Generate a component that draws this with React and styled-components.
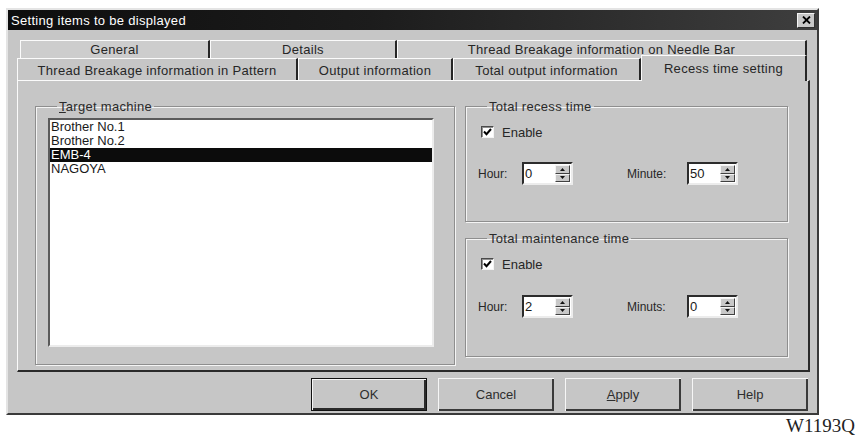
import React from 'react';
import styled, { createGlobalStyle } from 'styled-components';

const GlobalStyle = createGlobalStyle`
  html, body { margin: 0; padding: 0; background: #fff; }
  body { font-family: "Liberation Sans", Arial, sans-serif; color: #2a2a2a; }
  * { box-sizing: border-box; }
`;

const Page = styled.div`
  width: 859px;
  height: 437px;
  padding: 8px 0 0 6px;
  display: flex;
  flex-direction: column;
  align-items: flex-start;
`;

const Window = styled.div`
  width: 813px;
  height: 407px;
  background: #c6c6c6;
  border: 2px solid;
  border-color: #e4e4e4 #3a3a3a #3a3a3a #e4e4e4;
  display: flex;
  flex-direction: column;
`;

const TitleBar = styled.div`
  height: 20px;
  flex: 0 0 20px;
  background: linear-gradient(90deg, #0e0e0e 0%, #1c1c1c 45%, #3e3e3e 100%);
  display: flex;
  align-items: center;
  justify-content: space-between;
  padding: 0 2px 0 2px;
`;

const TitleText = styled.span`
  color: #fff;
  font-size: 13px;
  letter-spacing: 0.3px;
  padding-left: 1px;
`;

const CloseButton = styled.div`
  width: 18px;
  height: 15px;
  background: #c8c8c8;
  border: 1px solid;
  border-color: #f4f4f4 #303030 #303030 #f4f4f4;
  display: flex;
  align-items: center;
  justify-content: center;
`;

const Body = styled.div`
  flex: 1;
  display: flex;
  flex-direction: column;
  padding: 10px 7px 2px 9px;
`;

const TabStrip = styled.div`
  display: flex;
  flex-direction: column;
`;

const TabRow = styled.div`
  display: flex;
  align-items: flex-end;
  height: ${p => p.$h}px;
  margin-left: ${p => p.$indent}px;
  margin-right: 3px;
`;

const Tab = styled.div`
  flex: 0 0 ${p => p.$w}px;
  height: ${p => (p.$active ? '26px' : '100%')};
  margin-bottom: ${p => (p.$active ? '-1px' : '0')};
  position: relative;
  z-index: ${p => (p.$active ? 2 : 0)};
  background: ${p => (p.$back ? '#cdcdcd' : '#c6c6c6')};
  border-top: 1px solid #fbfbfb;
  border-left: 1px solid #fbfbfb;
  border-right: 2px solid #262626;
  display: flex;
  align-items: ${p => (p.$active ? 'flex-start' : 'center')};
  padding-top: ${p => (p.$active ? '5px' : p.$back ? '0' : '2px')};
  justify-content: center;
  font-size: 13px;
  letter-spacing: 0.3px;
  color: #262626;
  white-space: nowrap;
`;

const Panel = styled.div`
  flex: 0 0 292px;
  border-top: 1px solid #fbfbfb;
  border-left: 1px solid #fbfbfb;
  border-right: 2px solid #2a2a2a;
  border-bottom: 2px solid #2a2a2a;
  display: flex;
  gap: 10px;
  padding: 18px 20px 5px 17px;
`;

const Group = styled.fieldset`
  margin: 0;
  min-width: 0;
  width: ${p => p.$w}px;
  height: ${p => p.$h}px;
  border: 1px solid #8e8e8e;
  box-shadow: 1px 1px 0 #f4f4f4, inset 1px 1px 0 #f4f4f4;
  padding: ${p => p.$pad};
`;

const Legend = styled.legend`
  padding: 0 2px;
  margin-left: 9px;
  font-size: 13px;
  line-height: 15px;
  letter-spacing: 0.3px;
  color: #2a2a2a;
`;

const Mnemonic = styled.span`
  text-decoration: underline;
`;

const ListBox = styled.div`
  height: 229px;
  background: #fff;
  border: 2px solid;
  border-color: #5a5a5a #ececec #ececec #5a5a5a;
  display: flex;
  flex-direction: column;
`;

const ListItem = styled.div`
  height: 14px;
  line-height: 14px;
  font-size: 13px;
  padding-left: 1px;
  color: ${p => (p.$selected ? '#fff' : '#1a1a1a')};
  background: ${p => (p.$selected ? '#0c0c0c' : 'transparent')};
`;

const RightColumn = styled.div`
  display: flex;
  flex-direction: column;
  gap: 9px;
`;

const CheckRow = styled.label`
  display: flex;
  align-items: center;
  gap: 8px;
  height: 16px;
  margin: 10px 0 0 3px;
  font-size: 13px;
  color: #262626;
`;

const CheckBox = styled.span`
  width: 13px;
  height: 12px;
  background: #fff;
  border: 1px solid;
  border-color: #4a4a4a #f4f4f4 #f4f4f4 #4a4a4a;
  box-shadow: inset 1px 1px 0 #909090;
  display: flex;
  align-items: center;
  justify-content: center;
`;

const SpinRow = styled.div`
  display: flex;
  align-items: center;
  height: 23px;
  margin-top: ${p => p.$top}px;
`;

const FieldLabel = styled.span`
  flex: 0 0 ${p => p.$w}px;
  font-size: 12px;
  color: #262626;
`;

const SpinBox = styled.div`
  flex: 0 0 ${p => p.$w}px;
  height: 23px;
  background: #fff;
  border: 2px solid;
  border-color: #2c2c2c #ececec #ececec #2c2c2c;
  display: flex;
  align-items: stretch;
  margin-right: ${p => p.$mr || 0}px;
`;

const SpinValue = styled.span`
  flex: 1;
  font-size: 13px;
  line-height: 19px;
  padding-left: 1px;
  color: #1a1a1a;
`;

const SpinButtons = styled.div`
  flex: 0 0 15px;
  display: flex;
  flex-direction: column;
  margin: 1px 1px 1px 0;
`;

const SpinArrow = styled.div`
  flex: 1;
  background: #c8c8c8;
  border: 1px solid;
  border-color: #f4f4f4 #404040 #404040 #f4f4f4;
  display: flex;
  align-items: center;
  justify-content: center;
`;

const ButtonRow = styled.div`
  display: flex;
  justify-content: flex-end;
  gap: 11px;
  margin: 6px 2px 0 0;
`;

const Button = styled.div`
  width: 116px;
  height: 33px;
  background: #c6c6c6;
  border: ${p => (p.$default ? '1px solid #111' : '0')};
  display: flex;
  align-items: center;
  justify-content: center;
  font-size: 13px;
  color: #2e2e2e;
  box-shadow: ${p =>
    p.$default
      ? 'inset 1px 1px 0 #f6f6f6, inset -2px -2px 0 #2a2a2a'
      : 'inset 1px 1px 0 #f6f6f6, inset -2px -2px 0 #3a3a3a'};
`;

const Caption = styled.div`
  align-self: flex-end;
  margin: 1px 4px 0 0;
  font-family: "Liberation Serif", "Times New Roman", serif;
  font-size: 19px;
  line-height: 19px;
  color: #222;
`;

const Check = () => (
  <svg width="9" height="8" viewBox="0 0 9 8">
    <path d="M1 3.5 L3.5 6.2 L8 1" stroke="#000" strokeWidth="2" fill="none" />
  </svg>
);

const Arrow = ({ up }) => (
  <svg width="5" height="3" viewBox="0 0 5 3">
    <path d={up ? 'M0 3 L2.5 0 L5 3 Z' : 'M0 0 L2.5 3 L5 0 Z'} fill="#111" />
  </svg>
);

const Spin = ({ value, mr }) => (
  <SpinBox $w={51} $mr={mr}>
    <SpinValue>{value}</SpinValue>
    <SpinButtons>
      <SpinArrow><Arrow up /></SpinArrow>
      <SpinArrow><Arrow /></SpinArrow>
    </SpinButtons>
  </SpinBox>
);

const TimeGroup = ({ title, h, hour, minute, minuteLabel, spinTop }) => (
  <Group $w={323} $h={h} $pad="0 12px 0 12px">
    <Legend>{title}</Legend>
    <CheckRow>
      <CheckBox><Check /></CheckBox>
      Enable
    </CheckRow>
    <SpinRow $top={spinTop}>
      <FieldLabel $w={44}>Hour:</FieldLabel>
      <Spin value={hour} mr={54} />
      <FieldLabel $w={60}>{minuteLabel}</FieldLabel>
      <Spin value={minute} />
    </SpinRow>
  </Group>
);

const machines = ['Brother No.1', 'Brother No.2', 'EMB-4', 'NAGOYA'];

export default function App() {
  return (
    <>
      <GlobalStyle />
      <Page>
        <Window>
          <TitleBar>
            <TitleText>Setting items to be displayed</TitleText>
            <CloseButton>
              <svg width="9" height="8" viewBox="0 0 9 8">
                <path d="M1 0.5 L8 7.5 M8 0.5 L1 7.5" stroke="#000" strokeWidth="1.8" />
              </svg>
            </CloseButton>
          </TitleBar>
          <Body>
            <TabStrip>
              <TabRow $h={18} $indent={3}>
                <Tab $back $w={190}>General</Tab>
                <Tab $back $w={187}>Details</Tab>
                <Tab $back $w={410}>Thread Breakage information on Needle Bar</Tab>
              </TabRow>
              <TabRow $h={22} $indent={0}>
                <Tab $w={281}>Thread Breakage information in Pattern</Tab>
                <Tab $w={155}>Output information</Tab>
                <Tab $w={188}>Total output information</Tab>
                <Tab $w={166} $active>Recess time setting</Tab>
              </TabRow>
            </TabStrip>
            <Panel>
              <Group $w={420} $h={266} $pad="4px 20px 0 12px">
                <Legend><Mnemonic>T</Mnemonic>arget machine</Legend>
                <ListBox>
                  {machines.map(m => (
                    <ListItem key={m} $selected={m === 'EMB-4'}>{m}</ListItem>
                  ))}
                </ListBox>
              </Group>
              <RightColumn>
                <TimeGroup title="Total recess time" h={123} hour="0" minute="50" minuteLabel="Minute:" spinTop={22} />
                <TimeGroup title="Total maintenance time" h={126} hour="2" minute="0" minuteLabel="Minuts:" spinTop={23} />
              </RightColumn>
            </Panel>
            <ButtonRow>
              <Button $default>OK</Button>
              <Button>Cancel</Button>
              <Button><Mnemonic>A</Mnemonic>pply</Button>
              <Button>Help</Button>
            </ButtonRow>
          </Body>
        </Window>
        <Caption>W1193Q</Caption>
      </Page>
    </>
  );
}
